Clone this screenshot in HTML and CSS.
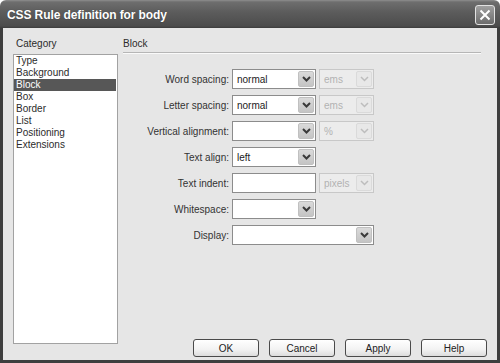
FILE: index.html
```html
<!DOCTYPE html>
<html>
<head>
<meta charset="utf-8">
<link rel="stylesheet" href="styles.css">
</head>
<body>
<div class="window">
  <div class="titlebar">
    <span class="title">CSS Rule definition for body</span>
    <span class="close"><svg width="12" height="12" viewBox="0 0 12 12"><path d="M1.5 1.5 L10.5 10.5 M10.5 1.5 L1.5 10.5" stroke="#fff" stroke-width="2" fill="none"/></svg></span>
  </div>
  <div class="frame">
    <div class="left">
      <div class="hdr cat">Category</div>
      <ul class="list">
        <li>Type</li>
        <li>Background</li>
        <li class="selected">Block</li>
        <li>Box</li>
        <li>Border</li>
        <li>List</li>
        <li>Positioning</li>
        <li>Extensions</li>
      </ul>
    </div>
    <div class="right">
      <div class="hdr">Block</div>
      <div class="sep"></div>
      <div class="form">
        <div class="row">
          <span class="lbl">Word spacing:</span>
          <div class="sel w84"><span class="val">normal</span><span class="arrow"><svg width="9" height="6" viewBox="0 0 9 6"><polyline points="1,1 4.5,4.5 8,1" fill="none" stroke="#3a3a3a" stroke-width="2"/></svg></span></div>
          <div class="sel dis"><span class="val">ems</span><span class="arrow"><svg width="9" height="6" viewBox="0 0 9 6"><polyline points="1,1 4.5,4.5 8,1" fill="none" stroke="#bdbdbd" stroke-width="1.5"/></svg></span></div>
        </div>
        <div class="row">
          <span class="lbl">Letter spacing:</span>
          <div class="sel w84"><span class="val">normal</span><span class="arrow"><svg width="9" height="6" viewBox="0 0 9 6"><polyline points="1,1 4.5,4.5 8,1" fill="none" stroke="#3a3a3a" stroke-width="2"/></svg></span></div>
          <div class="sel dis"><span class="val">ems</span><span class="arrow"><svg width="9" height="6" viewBox="0 0 9 6"><polyline points="1,1 4.5,4.5 8,1" fill="none" stroke="#bdbdbd" stroke-width="1.5"/></svg></span></div>
        </div>
        <div class="row">
          <span class="lbl">Vertical alignment:</span>
          <div class="sel w84"><span class="val"></span><span class="arrow"><svg width="9" height="6" viewBox="0 0 9 6"><polyline points="1,1 4.5,4.5 8,1" fill="none" stroke="#3a3a3a" stroke-width="2"/></svg></span></div>
          <div class="sel dis"><span class="val">%</span><span class="arrow"><svg width="9" height="6" viewBox="0 0 9 6"><polyline points="1,1 4.5,4.5 8,1" fill="none" stroke="#bdbdbd" stroke-width="1.5"/></svg></span></div>
        </div>
        <div class="row">
          <span class="lbl">Text align:</span>
          <div class="sel w84"><span class="val">left</span><span class="arrow"><svg width="9" height="6" viewBox="0 0 9 6"><polyline points="1,1 4.5,4.5 8,1" fill="none" stroke="#3a3a3a" stroke-width="2"/></svg></span></div>
        </div>
        <div class="row">
          <span class="lbl">Text indent:</span>
          <div class="input w84"></div>
          <div class="sel dis"><span class="val">pixels</span><span class="arrow"><svg width="9" height="6" viewBox="0 0 9 6"><polyline points="1,1 4.5,4.5 8,1" fill="none" stroke="#bdbdbd" stroke-width="1.5"/></svg></span></div>
        </div>
        <div class="row">
          <span class="lbl">Whitespace:</span>
          <div class="sel w84"><span class="val"></span><span class="arrow"><svg width="9" height="6" viewBox="0 0 9 6"><polyline points="1,1 4.5,4.5 8,1" fill="none" stroke="#3a3a3a" stroke-width="2"/></svg></span></div>
        </div>
        <div class="row">
          <span class="lbl">Display:</span>
          <div class="sel w142"><span class="val"></span><span class="arrow"><svg width="9" height="6" viewBox="0 0 9 6"><polyline points="1,1 4.5,4.5 8,1" fill="none" stroke="#3a3a3a" stroke-width="2"/></svg></span></div>
        </div>
      </div>
      <div class="buttons">
        <button class="btn">OK</button>
        <button class="btn">Cancel</button>
        <button class="btn">Apply</button>
        <button class="btn">Help</button>
      </div>
    </div>
  </div>
</div>
</body>
</html>
```
FILE: styles.css
```css
html, body {
  margin: 0;
  padding: 0;
  background: #ffffff;
}
body {
  font-family: "Liberation Sans", Arial, sans-serif;
  font-size: 10px;
  color: #2b2b2b;
}
.window {
  width: 500px;
  height: 363px;
  display: flex;
  flex-direction: column;
}
.titlebar {
  height: 28px;
  flex: none;
  display: flex;
  align-items: flex-start;
  background: linear-gradient(#8e8e8e 0px, #6e6e6e 2px, #5c5c5c 12px, #4c4c4c 26px, #3c3c3c 28px);
  border-radius: 6px 6px 0 0;
}
.title {
  color: #ffffff;
  font-weight: bold;
  font-size: 12px;
  line-height: 12px;
  margin: 9px 0 0 7px;
  letter-spacing: -0.1px;
  text-shadow: 0 0 1px rgba(0,0,0,0.4);
}
.close {
  margin: 5px 5px 0 auto;
  width: 20px;
  height: 20px;
  box-sizing: border-box;
  border: 1px solid #e2e2e2;
  border-radius: 3px;
  background: linear-gradient(#a0a0a0, #6c6c6c);
  display: flex;
  align-items: center;
  justify-content: center;
}
.frame {
  flex: 1;
  display: flex;
  background: #e6e6e6;
  border: 3px solid #3e3e3e;
  border-top: 0;
}
.left {
  width: 105px;
  margin-left: 10px;
  padding: 10px 0 16px;
  display: flex;
  flex-direction: column;
}
.hdr {
  line-height: 12px;
  height: 12px;
}
.cat {
  padding-left: 3px;
}
.list {
  margin: 4px 0 0;
  padding: 0;
  list-style: none;
  background: #ffffff;
  border: 1px solid #a2a2a2;
  flex: 1;
}
.list li {
  line-height: 12px;
  height: 12px;
  padding-left: 2px;
  margin-right: 1px;
}
.list li.selected {
  background: #575757;
  color: #ffffff;
}
.right {
  flex: 1;
  margin-left: 5px;
  padding: 10px 10px 3px 0;
  display: flex;
  flex-direction: column;
}
.sep {
  margin: 2px 6px 0 0;
  height: 0;
  border-top: 1px solid #b6b6b6;
  border-bottom: 1px solid #fafafa;
}
.form {
  margin-top: 15px;
  display: flex;
  flex-direction: column;
  gap: 6px;
}
.row {
  display: flex;
  align-items: center;
  height: 20px;
}
.lbl {
  width: 106px;
  text-align: right;
  margin-right: 3px;
  color: #333333;
}
.sel, .input {
  box-sizing: border-box;
  height: 20px;
  border: 1px solid #8c8c8c;
  background: #ffffff;
  display: flex;
  align-items: center;
  padding-left: 4px;
}
.val {
  flex: 1;
  color: #222222;
}
.arrow {
  width: 16px;
  height: 16px;
  margin-right: 1px;
  box-sizing: border-box;
  background: linear-gradient(#dadada, #c4c4c4);
  border: 1px solid #c0c0c0;
  border-radius: 2px;
  display: flex;
  align-items: center;
  justify-content: center;
}
.w84 { width: 84px; }
.w142 { width: 142px; }
.dis {
  width: 55px;
  margin-left: 3px;
  background: #ececec;
  border-color: #c8c8c8;
}
.dis .val {
  color: #b2b2b2;
}
.dis .arrow {
  background: #e8e8e8;
  border-color: #dadada;
}
.buttons {
  margin-top: auto;
  display: flex;
  justify-content: flex-end;
  gap: 10px;
}
.btn {
  width: 66px;
  height: 18px;
  box-sizing: border-box;
  margin: 0;
  padding: 0;
  font-family: "Liberation Sans", Arial, sans-serif;
  font-size: 10px;
  color: #222222;
  border: 1px solid #4a4a4a;
  border-radius: 3px;
  background: linear-gradient(#ffffff, #f2f2f2 60%, #dcdcdc);
}
```
